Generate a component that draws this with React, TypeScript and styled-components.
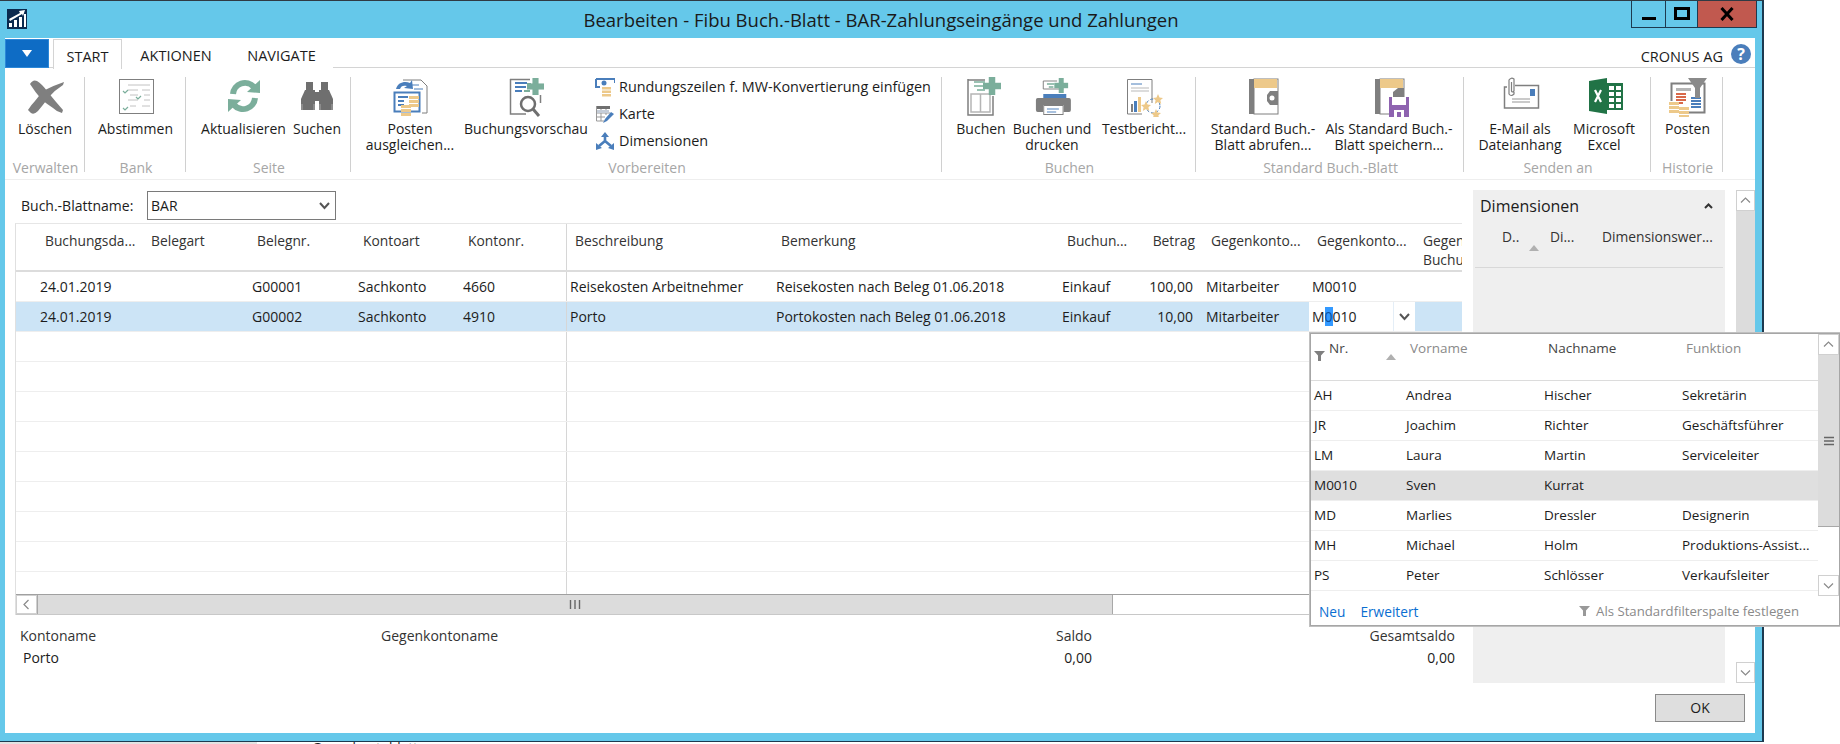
import styled, { createGlobalStyle } from "styled-components";

const GRAY = "#7f7f7f";
const GREEN = "#7bae9b";
const BLUE = "#4a7ebb";
const GOLD = "#edc98a";
const LINE = "#b5b5b5";

const GRID_COLUMNS = "21px 106px 106px 106px 105px 107px 206px 286px 84px 60px 106px 106px 47px";

const GlobalStyle = createGlobalStyle`
  html, body {
    margin: 0;
    padding: 0;
    background: #fff;
  }
  * {
    box-sizing: border-box;
  }
  body {
    font-family: "Open Sans", "Noto Sans", "Liberation Sans", sans-serif;
    font-size: 14px;
    color: #1c1c1c;
  }
`;

function Coins({ x, y }: { x: number; y: number }) {
  return (
    <g fill={GOLD}>
      <rect x={x} y={y} width="10" height="3" />
      <rect x={x} y={y + 4} width="10" height="3" />
      <rect x={x} y={y + 8} width="10" height="3" />
    </g>
  );
}

function Plus({ x, y, s = 16 }: { x: number; y: number; s?: number }) {
  const t = s * 0.36;
  const o = (s - t) / 2;
  return (
    <g fill={GREEN}>
      <rect x={x + o} y={y} width={t} height={s} />
      <rect x={x} y={y + o} width={s} height={t} />
    </g>
  );
}

const Svg = ({ children, size = 40 }: { children: React.ReactNode; size?: number }) => (
  <svg width={size} height={size} viewBox={`0 0 ${size} ${size}`}>
    {children}
  </svg>
);

const DeleteIcon = () => (
  <Svg>
    <path fill={GRAY} d="M5 7 Q8 2 12 4 Q17 7 22 14 Q30 24 38 33 L37 36 Q32 35 28 31 Q22 27 17 23 Q10 15 5 7 Z" />
    <path fill={GRAY} d="M39 5 L38 8 Q30 13 24 20 Q18 28 13 34 Q9 38 6 36 L3 33 Q6 28 10 24 Q15 17 20 13 Q30 8 39 5 Z" />
  </Svg>
);

const ReconcileIcon = () => (
  <Svg>
    <rect x="3.5" y="2.5" width="34" height="34" fill="#fff" stroke={GRAY} />
    <g stroke="#c2c2c2">
      <path d="M12 8H34M12 13H22M26 13H34M14 18H22M28 18H34M12 23H22M28 23H34M14 29H20M26 29H34" />
    </g>
    <g stroke={GREEN} fill="none" strokeWidth="1.2">
      <path d="M7 14l2 2 3-3M20 20l2 2 3-3M7 31l2 2 3-3" />
    </g>
  </Svg>
);

const RefreshIcon = () => (
  <Svg>
    <g fill="none" stroke={GREEN} strokeWidth="6">
      <path d="M9 17 A12 12 0 0 1 30 10" />
      <path d="M31 21 A12 12 0 0 1 10 28" />
    </g>
    <path fill={GREEN} d="M23 15 L36 16 L36 3 Z" />
    <path fill={GREEN} d="M17 23 L4 22 L4 35 Z" />
  </Svg>
);

const SearchIcon = () => (
  <Svg>
    <g fill="#6f6f6f">
      <rect x="9" y="5" width="7" height="8" />
      <rect x="24" y="5" width="7" height="8" />
      <path d="M8 13 H18 V33 H4 V22 Z" />
      <path d="M22 13 H32 L36 22 V33 H22 Z" />
      <rect x="18" y="15" width="4" height="9" />
    </g>
    <path d="M5 27V33M17 27V33M23 27V33M35 27V33" stroke="#a9a9a9" />
  </Svg>
);

const ApplyIcon = () => (
  <Svg>
    <path d="M13 3 H31 L37 9 V36 H32" fill="#fff" stroke={GRAY} />
    <path d="M19 8H29M24 12H33" stroke={BLUE} />
    <path d="M6 12 C8 5 15 4 20 6 L22 3 L23 12 L14 11 L17 9 C13 8 11 9 10 12 Z" fill={BLUE} />
    <rect x="4.5" y="15.5" width="25" height="19" fill="#fff" stroke={BLUE} strokeWidth="2" />
    <path d="M8 20H18M8 24H14M8 28H14" stroke={BLUE} strokeWidth="2" />
    <Coins x={19} y={19} />
    <Coins x={11} y={28} />
  </Svg>
);

const PreviewIcon = () => (
  <Svg>
    <path d="M4 2.5 H24 M4.5 2 V37 H20 M34.5 18 V26" fill="none" stroke={GRAY} strokeWidth="1.5" />
    <path d="M9 6H21M9 10H20M9 14H16" stroke={BLUE} strokeWidth="2" />
    <path d="M21 7H25M18 14H24" stroke={GREEN} strokeWidth="2" />
    <Plus x={21} y={1} s={17} />
    <circle cx="22" cy="27" r="7" fill="#fff" stroke="#6f6f6f" strokeWidth="2.5" />
    <path d="M27 32 L33 39" stroke="#6f6f6f" strokeWidth="3" />
  </Svg>
);

const PostIcon = () => (
  <Svg>
    <g transform="translate(2 -1)">
      <path d="M5 4 H22 M5 3 V39 H30 V20" fill="none" stroke={GRAY} strokeWidth="1.5" />
      <path d="M11 6H22M11 10H20M14 14H22" stroke={GREEN} strokeWidth="1.5" />
      <path d="M8 18H27V36H8Z M17.5 18V36" fill="none" stroke={LINE} strokeWidth="1.5" />
      <Plus x={20} y={1} s={18} />
    </g>
  </Svg>
);

const PrintIcon = () => (
  <Svg>
    <g transform="translate(3 0) scale(0.92 1)">
      <path d="M9 12 V4 H24 M9 12 H31" fill="#fff" stroke={GRAY} />
      <path d="M13 7H21M15 10H20" stroke={GREEN} strokeWidth="1.5" />
      <Plus x={21} y={1} s={15} />
      <rect x="9" y="17" width="25" height="4" fill={BLUE} />
      <path d="M8 21 H3 Q1 21 1 23 V33 Q1 35 3 35 H9 V28 H31 V35 H37 Q39 35 39 33 V23 Q39 21 37 21 Z" fill={GRAY} />
      <rect x="9.5" y="28.5" width="21" height="9" fill="#fff" stroke={GRAY} />
      <path d="M13 32H26M13 35H23" stroke={BLUE} />
    </g>
  </Svg>
);

const Star = ({ x, y }: { x: number; y: number }) => (
  <path fill={GOLD} transform={`translate(${x} ${y})`} d="M5 0 L6.5 3.5 L10 4 L7.4 6.3 L8.2 10 L5 8 L1.8 10 L2.6 6.3 L0 4 L3.5 3.5 Z" />
);

const TestReportIcon = () => (
  <Svg>
    <path d="M28 26 V2.5 H3.5 V37 H18" fill="#fff" stroke={GRAY} />
    <path d="M7 7H18" stroke={BLUE} />
    <path d="M7 11H25M7 14H25" stroke="#b9b9b9" />
    <rect x="7" y="27" width="2" height="8" fill={GRAY} />
    <rect x="10" y="24" width="3" height="11" fill={BLUE} />
    <rect x="14" y="20" width="3" height="15" fill={GOLD} />
    <circle cx="29" cy="29" r="7" fill="none" stroke={BLUE} strokeDasharray="3 2" />
    <Star x={29} y={17} />
    <Star x={17} y={24} />
    <Star x={27} y={32} />
  </Svg>
);

const NotebookIcon = () => (
  <>
    <rect x="6" y="2" width="5" height="35" fill={GRAY} />
    <rect x="11" y="2" width="24" height="35" fill="#fff" stroke={GRAY} />
    <rect x="11" y="2" width="23" height="9" fill={GOLD} />
  </>
);

const StandardFetchIcon = () => (
  <Svg>
    <NotebookIcon />
    <path d="M35 14 V28 H27 L24 24 V18 L27 14 Z" fill={GRAY} />
    <circle cx="29" cy="21" r="2.5" fill="#fff" />
  </Svg>
);

const StandardSaveIcon = () => (
  <Svg>
    <NotebookIcon />
    <path d="M24 20 V15 L29 11 H35 V20 Z" fill={GRAY} />
    <rect x="20" y="20" width="20" height="20" fill="#8e63b0" />
    <rect x="23" y="20" width="14" height="8" fill="#fff" />
    <rect x="25" y="33" width="10" height="7" fill="#fff" />
    <rect x="28" y="35" width="4" height="5" fill="#8e63b0" />
  </Svg>
);

const MailIcon = () => (
  <Svg>
    <path d="M15 8.5 H38.5 V31 H4.5 V10 H7" fill="#fff" stroke={GRAY} strokeWidth="1.5" />
    <rect x="30" y="12" width="5" height="7" fill={BLUE} />
    <path d="M12 22H30M12 25H30" stroke="#b9b9b9" strokeWidth="1.5" />
    <path d="M14 15 V17 Q11 20 9 17 V3 Q11 0 14 2 V14 Q12 16 11.5 14 V5" fill="none" stroke={GRAY} strokeWidth="1.2" />
  </Svg>
);

const ExcelIcon = () => (
  <Svg>
    <g transform="translate(3 1)">
      <path d="M2 3 L20 0 V36 L2 33 Z" fill="#217346" />
      <rect x="20" y="5" width="16" height="27" fill="#217346" />
      <g fill="#fff">
        <rect x="22" y="8" width="5" height="4" />
        <rect x="29" y="8" width="5" height="4" />
        <rect x="22" y="14" width="5" height="4" />
        <rect x="29" y="14" width="5" height="4" />
        <rect x="22" y="20" width="5" height="4" />
        <rect x="29" y="20" width="5" height="4" />
        <rect x="22" y="26" width="5" height="4" />
        <rect x="29" y="26" width="5" height="4" />
      </g>
      <path d="M8 12 L14 24 M14 12 L8 24" fill="none" stroke="#fff" strokeWidth="2.2" />
    </g>
  </Svg>
);

const EntriesIcon = () => (
  <Svg>
    <path d="M3.5 24 V6.5 H36.5 V35.5 H20" fill="#fff" stroke={GRAY} strokeWidth="2" />
    <rect x="8" y="11" width="15" height="3" fill={LINE} />
    <path d="M8 17H18M8 20H18M8 23H18M8 26H15" stroke="#d9694a" strokeWidth="2" />
    <path d="M23 21H33M23 24H33M23 27H33M23 30H33" stroke={BLUE} strokeWidth="2" />
    <path d="M20 1 H39 L32 11 V21 H27 V11 Z" fill="#8a8a8a" />
    <Coins x={1} y={25} />
    <Coins x={11} y={30} />
  </Svg>
);

const RoundingIcon = () => (
  <Svg size={20}>
    <path d="M1 2H20V6M1 2V10H5" fill="none" stroke={BLUE} strokeWidth="2" />
    <circle cx="9" cy="6" r="2.5" fill={BLUE} />
    <rect x="7" y="10" width="9" height="2.5" fill={GOLD} />
    <rect x="7" y="13.5" width="9" height="2.5" fill={GOLD} />
    <rect x="7" y="17" width="9" height="2.5" fill={GOLD} />
  </Svg>
);

const MapIcon = () => (
  <Svg size={20}>
    <rect x="1" y="2" width="14" height="3" fill="#6f6f6f" />
    <path d="M1.5 2V17H9M6 5V17M11 5V11M1 9H15M1 13H10" fill="none" stroke="#999" />
    <rect x="2" y="6" width="12" height="3" fill="#c5cdd8" />
    <path d="M8 19 L10 15 L16 8 L19 10 L12 17 Z" fill={BLUE} />
  </Svg>
);

const DimensionsIcon = () => (
  <Svg size={20}>
    <path d="M10 10V4M10 10L4 15M10 10L16 15" stroke={BLUE} strokeWidth="2.6" fill="none" />
    <path d="M10 1 L14 6 H6 Z M1 19 L1 12 L7 17 Z M19 19 L19 12 L13 17 Z" fill={BLUE} />
  </Svg>
);

const AppLogo = () => (
  <svg width="20" height="20" viewBox="0 0 20 20">
    <rect width="20" height="20" fill="#0b2a4f" />
    <path d="M2 18V14H5V18ZM7 18V11H10V18ZM12 18V8H15V18ZM17 18V5H19V18Z" fill="#fff" />
    <path d="M2 10 L13 4 L12 2 L18 1 L16 7 L15 5 L3 12 Z" fill="#fff" />
  </svg>
);

const Chevron = ({ dir, color = "#8a8a8a" }: { dir: "up" | "down" | "left"; color?: string }) => (
  <svg width="11" height="11" viewBox="0 0 11 11">
    <path
      d={dir === "up" ? "M1 7.5 L5.5 3 L10 7.5" : dir === "down" ? "M1 3.5 L5.5 8 L10 3.5" : "M7.5 1 L3 5.5 L7.5 10"}
      fill="none"
      stroke={color}
      strokeWidth="1.2"
    />
  </svg>
);

const BoldChevron = () => (
  <svg width="11" height="9" viewBox="0 0 11 9">
    <path d="M1 2 L5.5 7 L10 2" fill="none" stroke="#555" strokeWidth="2" />
  </svg>
);

const FilterIcon = ({ color = GRAY }: { color?: string }) => (
  <svg width="11" height="10" viewBox="0 0 11 10">
    <path d="M0 0 H11 L7 4.5 V10 H4 V4.5 Z" fill={color} />
  </svg>
);

const SortUp = () => (
  <svg width="10" height="6" viewBox="0 0 10 6">
    <path d="M5 0 L10 6 H0 Z" fill="#b0b0b0" />
  </svg>
);

type RibbonItem = { label: string[]; icon: React.ReactNode; w: number };

function LargeButton({ label, icon, w }: RibbonItem) {
  return (
    <ActionButton $w={w}>
      <IconSlot>{icon}</IconSlot>
      {label.map((line) => (
        <ActionLine key={line}>{line}</ActionLine>
      ))}
    </ActionButton>
  );
}

const gridRows = [
  ["", "24.01.2019", "", "G00001", "Sachkonto", "4660", "Reisekosten Arbeitnehmer", "Reisekosten nach Beleg 01.06.2018", "Einkauf", "100,00", "Mitarbeiter", "M0010", ""],
  ["", "24.01.2019", "", "G00002", "Sachkonto", "4910", "Porto", "Portokosten nach Beleg 01.06.2018", "Einkauf", "10,00", "Mitarbeiter", "", ""],
];

const gridHead = ["", "Buchungsda...", "Belegart", "Belegnr.", "Kontoart", "Kontonr.", "Beschreibung", "Bemerkung", "Buchun...", "Betrag", "Gegenkonto...", "Gegenkonto...", "Gegen- Buchungs"];

const employees = [
  ["AH", "Andrea", "Hischer", "Sekretärin"],
  ["JR", "Joachim", "Richter", "Geschäftsführer"],
  ["LM", "Laura", "Martin", "Serviceleiter"],
  ["M0010", "Sven", "Kurrat", ""],
  ["MD", "Marlies", "Dressler", "Designerin"],
  ["MH", "Michael", "Holm", "Produktions-Assist..."],
  ["PS", "Peter", "Schlösser", "Verkaufsleiter"],
];

export default function App() {
  return (
    <Page>
      <GlobalStyle />
      <Window>
        <TitleBar>
          <LogoSlot>
            <AppLogo />
          </LogoSlot>
          <TitleText>Bearbeiten - Fibu Buch.-Blatt - BAR-Zahlungseingänge und Zahlungen</TitleText>
          <WindowButtons>
            <WindowButton $w={35}>
              <svg width="16" height="16" viewBox="0 0 16 16">
                <rect x="1" y="11" width="14" height="3" fill="#000" />
              </svg>
            </WindowButton>
            <WindowButton $w={33}>
              <svg width="16" height="14" viewBox="0 0 16 14">
                <rect x="1.5" y="1.5" width="13" height="10" fill="none" stroke="#000" strokeWidth="3" />
              </svg>
            </WindowButton>
            <WindowButton $w={60} $close>
              <svg width="14" height="14" viewBox="0 0 14 14">
                <path d="M1.5 1 L12.5 13 M12.5 1 L1.5 13" stroke="#000" strokeWidth="3" />
              </svg>
            </WindowButton>
          </WindowButtons>
        </TitleBar>

        <Client>
          <TabBar>
            <FileButton>
              <svg width="10" height="7" viewBox="0 0 10 7">
                <path d="M0 0 H10 L5 7 Z" fill="#fff" />
              </svg>
            </FileButton>
            <Tab $w={69} $active>
              START
            </Tab>
            <Tab $w={108}>AKTIONEN</Tab>
            <Tab $w={103}>NAVIGATE</Tab>
            <Company>CRONUS AG</Company>
            <HelpBadge>?</HelpBadge>
          </TabBar>

          <Ribbon>
            <RibbonGroup $w={80} title="Verwalten">
              <LargeButton w={80} label={["Löschen"]} icon={<DeleteIcon />} />
            </RibbonGroup>
            <RibbonGroup $w={101} $pad={2} title="Bank">
              <LargeButton w={97} label={["Abstimmen"]} icon={<ReconcileIcon />} />
            </RibbonGroup>
            <RibbonGroup $w={165} $pad={15} title="Seite">
              <LargeButton w={85} label={["Aktualisieren"]} icon={<RefreshIcon />} />
              <LargeButton w={62} label={["Suchen"]} icon={<SearchIcon />} />
            </RibbonGroup>
            <RibbonGroup $w={591} $pad={15} title="Vorbereiten">
              <LargeButton w={88} label={["Posten", "ausgleichen..."]} icon={<ApplyIcon />} />
              <LargeButton w={144} label={["Buchungsvorschau"]} icon={<PreviewIcon />} />
              <SmallActions>
                <SmallAction>
                  <RoundingIcon />
                  Rundungszeilen f. MW-Konvertierung einfügen
                </SmallAction>
                <SmallAction>
                  <MapIcon />
                  Karte
                </SmallAction>
                <SmallAction>
                  <DimensionsIcon />
                  Dimensionen
                </SmallAction>
              </SmallActions>
            </RibbonGroup>
            <RibbonGroup $w={254} $pad={8} title="Buchen">
              <LargeButton w={62} label={["Buchen"]} icon={<PostIcon />} />
              <LargeButton w={80} label={["Buchen und", "drucken"]} icon={<PrintIcon />} />
              <LargeButton w={104} label={["Testbericht..."]} icon={<TestReportIcon />} />
            </RibbonGroup>
            <RibbonGroup $w={268} $pad={12} title="Standard Buch.-Blatt">
              <LargeButton w={110} label={["Standard Buch.-", "Blatt abrufen..."]} icon={<StandardFetchIcon />} />
              <LargeButton w={142} label={["Als Standard Buch.-", "Blatt speichern..."]} icon={<StandardSaveIcon />} />
            </RibbonGroup>
            <RibbonGroup $w={187} $pad={10} title="Senden an">
              <LargeButton w={92} label={["E-Mail als", "Dateianhang"]} icon={<MailIcon />} />
              <LargeButton w={76} label={["Microsoft", "Excel"]} icon={<ExcelIcon />} />
            </RibbonGroup>
            <RibbonGroup $w={72} $pad={2} title="Historie">
              <LargeButton w={69} label={["Posten"]} icon={<EntriesIcon />} />
            </RibbonGroup>
          </Ribbon>

          <Body>
            <MainColumn>
              <BatchRow>
                <BatchLabel>Buch.-Blattname:</BatchLabel>
                <ComboBox>
                  BAR
                  <BoldChevron />
                </ComboBox>
              </BatchRow>

              <GridBox>
                <GridHead>
                  {gridHead.map((text, i) => (
                    <HeadCell key={i} $frozen={i === 5} $right={i === 9} $wrap={i === 12}>
                      {text}
                    </HeadCell>
                  ))}
                </GridHead>
                <GridBodyArea>
                  {gridRows.map((row, r) => (
                    <GridRow key={r} $selected={r === 1}>
                      {row.map((text, i) =>
                        r === 1 && i === 11 ? (
                          <EditCell key={i}>
                            <span>
                              M<Selection>0</Selection>010
                            </span>
                            <EditDrop>
                              <BoldChevron />
                            </EditDrop>
                          </EditCell>
                        ) : (
                          <BodyCell key={i} $frozen={i === 5} $right={i === 9}>
                            {text}
                          </BodyCell>
                        )
                      )}
                    </GridRow>
                  ))}
                  {Array.from({ length: 9 }).map((_, r) => (
                    <GridRow key={r}>
                      {gridHead.map((_, i) => (
                        <BodyCell key={i} $frozen={i === 5} />
                      ))}
                    </GridRow>
                  ))}
                </GridBodyArea>
                <HScroll>
                  <ScrollButton $w={21}>
                    <Chevron dir="left" />
                  </ScrollButton>
                  <HThumb>
                    <svg width="12" height="9" viewBox="0 0 12 9">
                      <path d="M1.5 0V9M6 0V9M10.5 0V9" stroke="#666" strokeWidth="1.4" />
                    </svg>
                  </HThumb>
                </HScroll>
              </GridBox>

              <Totals>
                <TotalCell>
                  <TotalLabel>Kontoname</TotalLabel>
                  <TotalValue $indent={3}>Porto</TotalValue>
                </TotalCell>
                <TotalCell>
                  <TotalLabel>Gegenkontoname</TotalLabel>
                </TotalCell>
                <TotalCell $right>
                  <TotalLabel>Saldo</TotalLabel>
                  <TotalValue>0,00</TotalValue>
                </TotalCell>
                <TotalCell $right>
                  <TotalLabel>Gesamtsaldo</TotalLabel>
                  <TotalValue>0,00</TotalValue>
                </TotalCell>
              </Totals>
            </MainColumn>

            <SideColumn>
              <SideRow>
                <DimensionPanel>
                  <DimensionTitle>
                    Dimensionen
                    <svg width="9" height="6" viewBox="0 0 9 6">
                      <path d="M1 5 L4.5 1.5 L8 5" fill="none" stroke="#333" strokeWidth="2" />
                    </svg>
                  </DimensionTitle>
                  <DimensionHead>
                    <DimensionColumn $w={48}>
                      D..
                      <SortSlot>
                        <SortUp />
                      </SortSlot>
                    </DimensionColumn>
                    <DimensionColumn $w={52}>Di...</DimensionColumn>
                    <DimensionColumn $w={110}>Dimensionswer...</DimensionColumn>
                  </DimensionHead>
                </DimensionPanel>
                <VScroll $thumb={200} $w={19} $track={493} />
              </SideRow>
              <OkRow>
                <OkButton>OK</OkButton>
              </OkRow>
            </SideColumn>
          </Body>
        </Client>
      </Window>

      <BottomStrip>
        <StripGray />
        <StripText>Gegenkontoblatt</StripText>
      </BottomStrip>

      <LookupPopup>
        <LookupMain>
          <LookupTable>
            <LookupHead>
              <LookupHeadCell $first>
                <FilterSlot>
                  <FilterIcon />
                </FilterSlot>
                Nr.
                <LookupSort>
                  <SortUp />
                </LookupSort>
              </LookupHeadCell>
              <LookupHeadCell $muted>Vorname</LookupHeadCell>
              <LookupHeadCell>Nachname</LookupHeadCell>
              <LookupHeadCell $muted>Funktion</LookupHeadCell>
            </LookupHead>
            {employees.map((row) => (
              <LookupRow key={row[0]} $selected={row[0] === "M0010"}>
                {row.map((text, i) => (
                  <LookupCell key={i}>{text}</LookupCell>
                ))}
              </LookupRow>
            ))}
          </LookupTable>
          <VScroll $thumb={172} $w={21} $track={262} $grip />
        </LookupMain>
        <LookupFooter>
          <FooterLink>Neu</FooterLink>
          <FooterLink>Erweitert</FooterLink>
          <FooterHint>
            <FilterIcon color="#999" />
            Als Standardfilterspalte festlegen
          </FooterHint>
        </LookupFooter>
      </LookupPopup>
    </Page>
  );
}

function VScroll({ $thumb, $w, $track, $grip }: { $thumb: number; $w: number; $track: number; $grip?: boolean }) {
  return (
    <VTrack $w={$w} $h={$track}>
      <ScrollButton $w={$w} $h={21}>
        <Chevron dir="up" />
      </ScrollButton>
      <VThumb $h={$thumb}>
        {$grip && (
          <svg width="10" height="10" viewBox="0 0 10 10">
            <path d="M0 1.5H10M0 5H10M0 8.5H10" stroke="#666" strokeWidth="1.4" />
          </svg>
        )}
      </VThumb>
      <VRest />
      <ScrollButton $w={$w} $h={21}>
        <Chevron dir="down" />
      </ScrollButton>
    </VTrack>
  );
}

function RibbonGroup({ $w, $pad, title, children }: { $w: number; $pad?: number; title: string; children: React.ReactNode }) {
  return (
    <GroupBox $w={$w}>
      <GroupItems $pad={$pad ?? 0}>{children}</GroupItems>
      <GroupTitle>{title}</GroupTitle>
    </GroupBox>
  );
}

const Page = styled.div`
  position: relative;
  width: 1840px;
  height: 744px;
  overflow: hidden;
  background: #fff;
`;

const Window = styled.div`
  width: 1764px;
  height: 742px;
  background: #65c8ea;
  border-top: 1px solid #2f3a44;
  border-right: 2px solid #1d3a50;
  border-bottom: 1px solid #1d3a50;
  padding-left: 5px;
  display: flex;
  flex-direction: column;
`;

const TitleBar = styled.div`
  height: 37px;
  margin-left: -5px;
  display: grid;
  grid-template-columns: 1fr auto 1fr;
  align-items: start;
`;

const LogoSlot = styled.div`
  padding: 8px 0 0 7px;
`;

const TitleText = styled.div`
  font-size: 18.5px;
  line-height: 37px;
  color: #1a1a1a;
  white-space: nowrap;
`;

const WindowButtons = styled.div`
  display: flex;
  justify-content: flex-end;
  padding-right: 5px;
`;

const WindowButton = styled.div<{ $w: number; $close?: boolean }>`
  width: ${(p) => p.$w}px;
  height: 27px;
  margin-left: -1px;
  border: 1px solid #1d3a50;
  border-top: 0;
  background: ${(p) => (p.$close ? "#c1594f" : "transparent")};
  display: flex;
  align-items: center;
  justify-content: center;
`;

const Client = styled.div`
  width: 1750px;
  height: 695px;
  background: #fff;
  display: flex;
  flex-direction: column;
`;

const TabBar = styled.div`
  height: 30px;
  flex: none;
  display: flex;
  align-items: stretch;
  border-bottom: 1px solid #d4d4d4;
  padding: 1px 4px 0 0;
`;

const FileButton = styled.div`
  width: 44px;
  height: 29px;
  margin-right: 4px;
  background: #0e6cc5;
  border: 1px solid #2c88d8;
  display: flex;
  align-items: center;
  justify-content: center;
`;

const Tab = styled.div<{ $w: number; $active?: boolean }>`
  width: ${(p) => p.$w}px;
  height: ${(p) => (p.$active ? "30px" : "29px")};
  line-height: 34px;
  text-align: center;
  font-size: 14.5px;
  color: #1c1c1c;
  background: #fff;
  border: ${(p) => (p.$active ? "1px solid #d4d4d4" : "0")};
  border-bottom: 0;
  z-index: 1;
`;

const Company = styled.div`
  margin-left: auto;
  line-height: 36px;
  font-size: 14.5px;
  color: #1c1c1c;
  white-space: nowrap;
`;

const HelpBadge = styled.div`
  width: 20px;
  height: 20px;
  margin: 5px 0 0 8px;
  border-radius: 50%;
  background: #4a7ebb;
  color: #fff;
  font-size: 16px;
  font-weight: 700;
  line-height: 20px;
  text-align: center;
`;

const Ribbon = styled.div`
  height: 112px;
  flex: none;
  display: flex;
  padding-top: 9px;
  border-bottom: 1px solid #eeeeee;
`;

const GroupBox = styled.div<{ $w: number }>`
  width: ${(p) => p.$w}px;
  height: 95px;
  flex: none;
  display: flex;
  flex-direction: column;
  border-right: 1px solid #d0d0d0;
`;

const GroupItems = styled.div<{ $pad: number }>`
  flex: 1;
  display: flex;
  padding-left: ${(p) => p.$pad}px;
  min-height: 0;
`;

const GroupTitle = styled.div`
  height: 20px;
  line-height: 32px;
  padding-left: 2px;
  text-align: center;
  font-size: 14px;
  color: #a6a6a6;
  white-space: nowrap;
`;

const ActionButton = styled.div<{ $w: number }>`
  width: ${(p) => p.$w}px;
  flex: none;
  display: flex;
  flex-direction: column;
  align-items: center;
`;

const IconSlot = styled.div`
  height: 44px;
  width: 40px;
  flex: none;
`;

const ActionLine = styled.div`
  line-height: 16px;
  white-space: nowrap;
  font-size: 14px;
  color: #1c1c1c;
`;

const SmallActions = styled.div`
  margin-left: -3px;
  display: flex;
  flex-direction: column;
  gap: 7px;
`;

const SmallAction = styled.div`
  height: 20px;
  display: flex;
  align-items: center;
  gap: 4px;
  line-height: 20px;
  white-space: nowrap;
  font-size: 14.4px;
  color: #1c1c1c;
`;

const Body = styled.div`
  flex: 1;
  min-height: 0;
  display: grid;
  grid-template-columns: 1468px 282px;
`;

const MainColumn = styled.div`
  padding: 11px 0 0 10px;
  display: flex;
  flex-direction: column;
`;

const BatchRow = styled.div`
  height: 29px;
  margin-bottom: 3px;
  flex: none;
  display: flex;
  align-items: center;
`;

const BatchLabel = styled.div`
  width: 132px;
  padding-left: 6px;
  font-size: 14px;
`;

const ComboBox = styled.div`
  width: 189px;
  height: 29px;
  border: 1px solid #7a7a7a;
  display: flex;
  align-items: center;
  justify-content: space-between;
  padding: 0 5px 0 3px;
`;

const GridBox = styled.div`
  width: 1447px;
  height: 392px;
  flex: none;
  border-top: 1px solid #e6e6e6;
  border-left: 1px solid #e0e0e0;
  display: flex;
  flex-direction: column;
  overflow: hidden;
`;

const GridHead = styled.div`
  height: 48px;
  flex: none;
  display: grid;
  grid-template-columns: ${GRID_COLUMNS};
  border-bottom: 2px solid #dcdcdc;
`;

const HeadCell = styled.div<{ $frozen?: boolean; $right?: boolean; $wrap?: boolean }>`
  padding: 7px ${(p) => (p.$right ? "8px" : "0")} 0 8px;
  font-size: 13.8px;
  line-height: 19px;
  color: #333;
  text-align: ${(p) => (p.$right ? "right" : "left")};
  white-space: ${(p) => (p.$wrap ? "normal" : "nowrap")};
  border-right: ${(p) => (p.$frozen ? "1px solid #d6d6d6" : "0")};
`;

const GridBodyArea = styled.div`
  flex: 1;
  min-height: 0;
  overflow: hidden;
`;

const GridRow = styled.div<{ $selected?: boolean }>`
  height: 30px;
  display: grid;
  grid-template-columns: ${GRID_COLUMNS};
  align-items: stretch;
  background: ${(p) => (p.$selected ? "#cce4f6" : "#fff")};
  border-bottom: 1px solid #eeeeee;
`;

const BodyCell = styled.div<{ $frozen?: boolean; $right?: boolean }>`
  padding: 0 ${(p) => (p.$right ? "10px" : "0")} 0 3px;
  line-height: 29px;
  font-size: 14px;
  color: #1c1c1c;
  white-space: nowrap;
  text-align: ${(p) => (p.$right ? "right" : "left")};
  border-right: ${(p) => (p.$frozen ? "1px solid #d6d6d6" : "0")};
`;

const EditCell = styled.div`
  background: #fff;
  display: flex;
  justify-content: space-between;
  padding-left: 3px;
  line-height: 29px;
  font-size: 14px;
  color: #1c1c1c;
`;

const Selection = styled.span`
  background: #3399ff;
  color: #0b4f9e;
`;

const EditDrop = styled.div`
  width: 22px;
  height: 29px;
  border-left: 1px solid #e4eef7;
  display: flex;
  align-items: center;
  justify-content: center;
`;

const HScroll = styled.div`
  height: 21px;
  flex: none;
  display: flex;
  background: #fff;
  border-top: 1px solid #a0a0a0;
  border-bottom: 1px solid #c8c8c8;
`;

const ScrollButton = styled.div<{ $w: number; $h?: number }>`
  width: ${(p) => p.$w}px;
  height: ${(p) => (p.$h ? `${p.$h}px` : "auto")};
  flex: none;
  background: #fff;
  border: 1px solid #d0d0d0;
  display: flex;
  align-items: center;
  justify-content: center;
`;

const HThumb = styled.div`
  width: 1076px;
  background: #dcdcdc;
  border-left: 1px solid #a8a8a8;
  border-right: 1px solid #a8a8a8;
  display: flex;
  align-items: center;
  justify-content: center;
`;

const Totals = styled.div`
  flex: 1;
  display: grid;
  grid-template-columns: 361px 519px 192px 363px;
  align-items: start;
  padding: 12px 0 0 5px;
`;

const TotalCell = styled.div<{ $right?: boolean }>`
  text-align: ${(p) => (p.$right ? "right" : "left")};
  white-space: nowrap;
`;

const TotalLabel = styled.div`
  line-height: 18px;
  font-size: 14px;
  color: #333;
`;

const TotalValue = styled.div<{ $indent?: number }>`
  margin-top: 4px;
  line-height: 18px;
  font-size: 14px;
  color: #1c1c1c;
  padding-left: ${(p) => p.$indent ?? 0}px;
`;

const SideColumn = styled.div`
  padding-top: 10px;
  display: flex;
  flex-direction: column;
`;

const SideRow = styled.div`
  display: flex;
  gap: 11px;
`;

const DimensionPanel = styled.div`
  width: 252px;
  height: 493px;
  background: #efefef;
`;

const DimensionTitle = styled.div`
  display: flex;
  align-items: center;
  justify-content: space-between;
  height: 30px;
  padding: 1px 12px 0 7px;
  font-size: 16px;
  color: #1c1c1c;
`;

const DimensionHead = styled.div`
  height: 48px;
  margin: 0 2px;
  padding: 7px 0 0 27px;
  display: flex;
  border-bottom: 1px solid #d8d8d8;
  font-size: 13.8px;
  color: #333;
`;

const DimensionColumn = styled.div<{ $w: number }>`
  width: ${(p) => p.$w}px;
  display: flex;
  white-space: nowrap;
`;

const SortSlot = styled.div`
  margin: 9px 0 0 10px;
`;

const VTrack = styled.div<{ $w: number; $h: number }>`
  width: ${(p) => p.$w}px;
  height: ${(p) => p.$h}px;
  flex: none;
  display: flex;
  flex-direction: column;
  background: #fff;
`;

const VThumb = styled.div<{ $h: number }>`
  height: ${(p) => p.$h}px;
  flex: none;
  background: #dcdcdc;
  border-bottom: 1px solid #a8a8a8;
  display: flex;
  align-items: center;
  justify-content: center;
`;

const VRest = styled.div`
  flex: 1;
`;

const OkRow = styled.div`
  display: flex;
  justify-content: flex-end;
  padding: 11px 10px 0 0;
`;

const OkButton = styled.div`
  width: 90px;
  height: 28px;
  line-height: 26px;
  text-align: center;
  background: #dedede;
  border: 1px solid #8a8a8a;
  font-size: 14px;
  color: #1c1c1c;
`;

const BottomStrip = styled.div`
  height: 2px;
  display: flex;
  overflow: hidden;
`;

const StripGray = styled.div`
  width: 257px;
  background: #e3e3e3;
`;

const StripText = styled.div`
  margin-left: 55px;
  font-size: 13.5px;
  line-height: 10px;
  height: 2px;
  color: #222;
`;

const LookupPopup = styled.div`
  position: absolute;
  left: 1310px;
  top: 333px;
  width: 530px;
  height: 293px;
  background: #fff;
  border: 1px solid #a6a6a6;
  display: flex;
  flex-direction: column;
  box-shadow: 0 0 0 1px #c0c0c0;
`;

const LookupMain = styled.div`
  display: flex;
  height: 263px;
  flex: none;
`;

const LookupTable = styled.div`
  flex: 1;
`;

const LookupHead = styled.div`
  height: 47px;
  display: grid;
  grid-template-columns: 92px 138px 138px 1fr;
  border-bottom: 1px solid #dcdcdc;
`;

const LookupHeadCell = styled.div<{ $first?: boolean; $muted?: boolean }>`
  position: relative;
  padding: 6px 0 0 ${(p) => (p.$first ? "18px" : "7px")};
  line-height: 17px;
  font-size: 13.5px;
  color: ${(p) => (p.$muted ? "#8a8a8a" : "#444")};
`;

const FilterSlot = styled.span`
  position: absolute;
  left: 3px;
  top: 14px;
`;

const LookupSort = styled.span`
  position: absolute;
  right: 7px;
  top: 13px;
`;

const LookupRow = styled.div<{ $selected?: boolean }>`
  height: 30px;
  display: grid;
  grid-template-columns: 92px 138px 138px 1fr;
  background: ${(p) => (p.$selected ? "#dfdfdf" : "#fff")};
  border-bottom: 1px solid #eeeeee;
`;

const LookupCell = styled.div`
  padding-left: 3px;
  line-height: 29px;
  font-size: 13.5px;
  color: #1c1c1c;
  white-space: nowrap;
  overflow: hidden;
`;

const LookupFooter = styled.div`
  flex: 1;
  display: flex;
  align-items: center;
  gap: 15px;
  padding: 0 40px 0 8px;
`;

const FooterLink = styled.div`
  color: #0a6ed1;
  font-size: 13.7px;
`;

const FooterHint = styled.div`
  margin-left: auto;
  display: flex;
  align-items: center;
  gap: 6px;
  color: #8a8a8a;
  font-size: 13.2px;
`;
